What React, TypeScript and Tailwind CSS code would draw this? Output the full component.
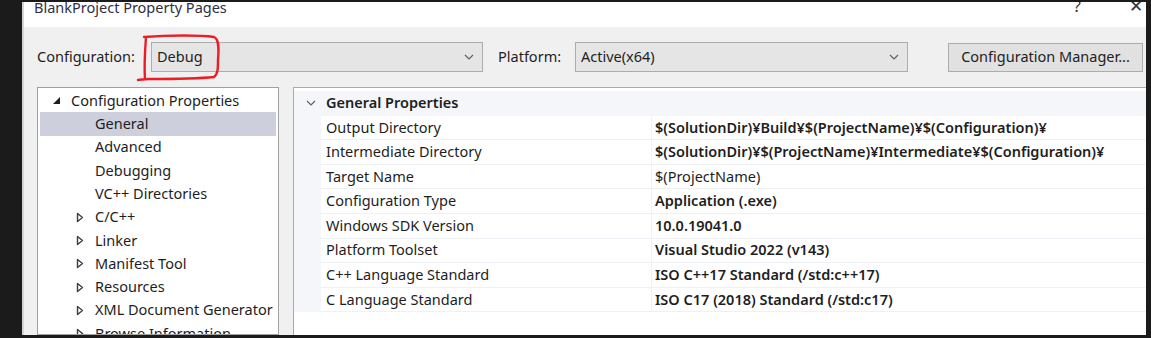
import React from "react";

const font = { fontFamily: '"Noto Sans", "Segoe UI", Arial, sans-serif' };

function Chevron({ className = "" }: { className?: string }) {
  return (
    <svg width="10" height="6" viewBox="0 0 10 6" className={className}>
      <path d="M1 1 L5 5 L9 1" fill="none" stroke="#5f5f5f" strokeWidth="1.2" />
    </svg>
  );
}

function Combo({ value, width }: { value: string; width: string }) {
  return (
    <div
      className={`${width} h-[30px] shrink-0 bg-[#e5e5e5] border border-[#adadad] flex items-center justify-between pl-[5px] pr-[8px] text-[14.5px] text-[#1e1e1e]`}
    >
      <span>{value}</span>
      <Chevron />
    </div>
  );
}

function Expanded() {
  return (
    <svg width="9" height="9" viewBox="0 0 9 9" className="shrink-0">
      <path d="M8 1 L8 8 L1 8 Z" fill="#1e1e1e" />
    </svg>
  );
}

function Collapsed() {
  return (
    <svg width="8" height="11" viewBox="0 0 8 11" className="shrink-0">
      <path d="M1.5 1.5 L6.5 5.5 L1.5 9.5 Z" fill="none" stroke="#3c3c3c" strokeWidth="1.4" strokeLinejoin="round" />
    </svg>
  );
}

const tree: { label: string; kind: "root" | "leaf" | "node"; selected?: boolean }[] = [
  { label: "Configuration Properties", kind: "root" },
  { label: "General", kind: "leaf", selected: true },
  { label: "Advanced", kind: "leaf" },
  { label: "Debugging", kind: "leaf" },
  { label: "VC++ Directories", kind: "leaf" },
  { label: "C/C++", kind: "node" },
  { label: "Linker", kind: "node" },
  { label: "Manifest Tool", kind: "node" },
  { label: "Resources", kind: "node" },
  { label: "XML Document Generator", kind: "node" },
  { label: "Browse Information", kind: "node" },
];

const props: { name: string; value: string; bold: boolean }[] = [
  { name: "Output Directory", value: "$(SolutionDir)¥Build¥$(ProjectName)¥$(Configuration)¥", bold: true },
  { name: "Intermediate Directory", value: "$(SolutionDir)¥$(ProjectName)¥Intermediate¥$(Configuration)¥", bold: true },
  { name: "Target Name", value: "$(ProjectName)", bold: false },
  { name: "Configuration Type", value: "Application (.exe)", bold: true },
  { name: "Windows SDK Version", value: "10.0.19041.0", bold: true },
  { name: "Platform Toolset", value: "Visual Studio 2022 (v143)", bold: true },
  { name: "C++ Language Standard", value: "ISO C++17 Standard (/std:c++17)", bold: true },
  { name: "C Language Standard", value: "ISO C17 (2018) Standard (/std:c17)", bold: true },
];

export default function App() {
  return (
    <div
      className="relative w-[1151px] h-[338px] bg-[#1b1b1b] pt-[2px] pl-[22px] pr-[5px] pb-[3px] overflow-hidden"
      style={font}
    >
      <div className="h-full bg-[#f0f0f0] border-l-2 border-[#d4d4d4] flex flex-col overflow-hidden">
        {/* Title bar */}
        <div className="h-[25px] shrink-0 bg-white flex items-start justify-between overflow-hidden">
          <span className="ml-[10px] mt-[-5px] text-[14.5px] leading-[20px] text-[#2f2f3f] whitespace-nowrap">
            BlankProject Property Pages
          </span>
          <div className="flex items-start mt-[-6px] text-[17px] leading-[20px] text-[#333]">
            <span className="mr-[48px]">?</span>
            <span className="mr-[3px] font-light">✕</span>
          </div>
        </div>

        {/* Toolbar */}
        <div className="flex items-center mt-[15px] pl-[13px] text-[14.5px] text-[#1e1e1e]">
          <span className="w-[114px] shrink-0">Configuration:</span>
          <Combo value="Debug" width="w-[332px]" />
          <span className="ml-[15px] w-[77px] shrink-0">Platform:</span>
          <Combo value="Active(x64)" width="w-[333px]" />
          <div className="ml-[40px] w-[195px] h-[29px] bg-[#e1e1e1] border border-[#adadad] flex items-center justify-center shrink-0 whitespace-nowrap">
            Configuration Manager...
          </div>
        </div>

        {/* Panels */}
        <div className="flex flex-1 mt-[15px] pl-[13px] min-h-0">
          {/* Tree */}
          <div className="w-[242px] shrink-0 bg-white border border-[#a0a0a0] pt-[1px] px-[2px] text-[14.5px] text-[#1e1e1e] overflow-hidden">
            {tree.map((t) => (
              <div
                key={t.label}
                className={`h-[23.3px] flex items-center whitespace-nowrap ${t.selected ? "bg-[#cdd0dc]" : ""}`}
              >
                {t.kind === "root" && (
                  <>
                    <span className="ml-[12px] mr-[10px] flex"><Expanded /></span>
                    <span>{t.label}</span>
                  </>
                )}
                {t.kind === "leaf" && <span className="ml-[55px]">{t.label}</span>}
                {t.kind === "node" && (
                  <>
                    <span className="ml-[36px] mr-[11px] flex"><Collapsed /></span>
                    <span>{t.label}</span>
                  </>
                )}
              </div>
            ))}
          </div>

          {/* Property grid */}
          <div className="ml-[14px] flex-1 bg-white border-t border-l border-[#a9a9a9] pt-[3px] text-[14.5px] text-[#1e1e1e]">
            <div className="bg-[#f4f6fa]">
              <div className="h-[24.6px] flex items-center">
                <span className="w-[32px] flex justify-center pl-[2px]"><Chevron /></span>
                <span className="font-semibold">General Properties</span>
              </div>
              {props.map((p) => (
                <div key={p.name} className="h-[24.6px] flex pl-[27px]">
                  <div className="w-[330px] bg-white border-b border-[#eef1f6] flex items-center pl-[5px] whitespace-nowrap">
                    {p.name}
                  </div>
                  <div className="w-px bg-[#eef1f6]" />
                  <div
                    className={`flex-1 bg-white border-b border-[#eef1f6] flex items-center pl-[3px] whitespace-nowrap ${p.bold ? "font-semibold" : ""}`}
                  >
                    {p.value}
                  </div>
                </div>
              ))}
            </div>
          </div>
        </div>
      </div>

      {/* Hand-drawn red annotation */}
      <svg
        className="absolute left-0 top-0 pointer-events-none"
        width="1151"
        height="338"
        viewBox="0 0 1151 338"
      >
        <path
          d="M146 37 C 145 50, 144 65, 145 79 M144 37 C 170 35, 200 35, 214 37 C 219 39, 219 48, 218 60 C 218 68, 218 74, 214 77 C 195 79, 170 79, 148 79 C 144 79, 141 80, 138 80"
          fill="none"
          stroke="#ee1c25"
          strokeWidth="2.4"
          strokeLinecap="round"
        />
      </svg>
    </div>
  );
}
